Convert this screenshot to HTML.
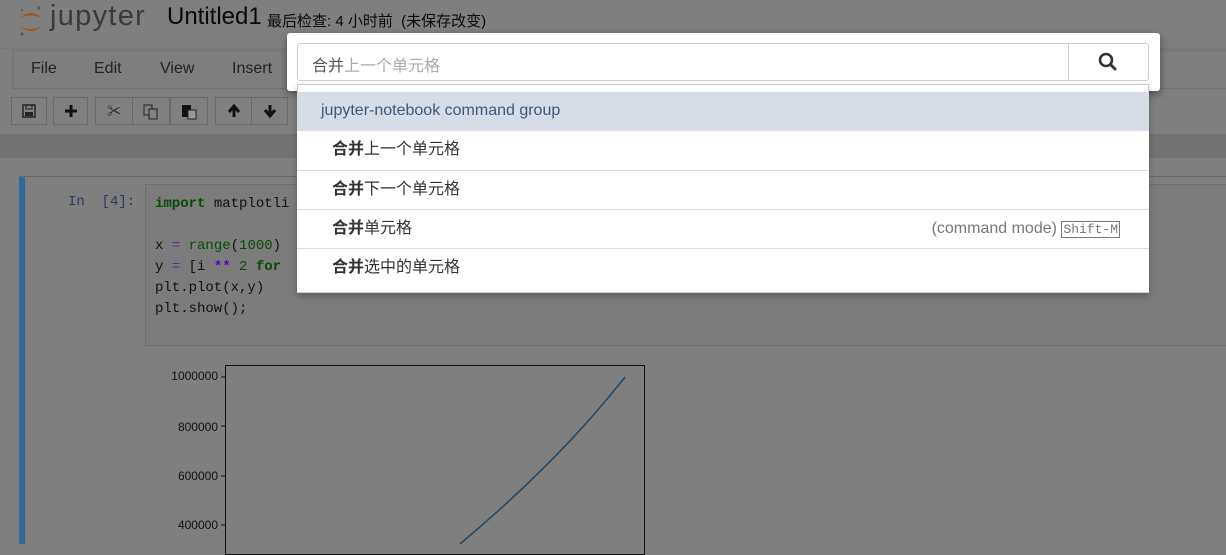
<!DOCTYPE html>
<html><head><meta charset="utf-8"><style>
body{margin:0;width:1226px;height:544px;overflow:hidden;background:#7f7f7f;font-family:"Liberation Sans","Noto Sans CJK SC",sans-serif;position:relative}
.a{position:absolute}
.btn{position:absolute;top:97px;height:28px;border:1px solid #6a6a6a;background:#808080;box-sizing:border-box;color:#1a1a1a;font-size:14px;text-align:center;line-height:26px}
.btn svg{margin-top:6px}
.mono{font-family:"Liberation Mono","Noto Sans CJK SC",monospace;font-size:14px;color:#111}
.row{position:absolute;left:297px;width:852px;height:39px;background:#fff;border-top:1px solid #ddd;box-sizing:border-box;font-size:16px;color:#333;line-height:38px;padding-left:35px;font-family:"Liberation Sans","Noto Sans CJK SC",sans-serif}
</style></head><body>
<div class="a" style="left:18px;top:4px;width:26px;height:32px">
<svg width="26" height="34"><path d="M2 14 Q13 4 24 14 Q13 9 2 14Z" fill="#a35618"/><path d="M2 22 Q13 32 24 22 Q13 28 2 22Z" fill="#a35618"/><circle cx="21" cy="4" r="1.5" fill="#555"/><circle cx="4" cy="30" r="1.5" fill="#555"/><circle cx="4" cy="6" r="1" fill="#555"/></svg></div>
<div class="a" style="left:50px;top:0px;font-size:29px;color:#3a3a3a;letter-spacing:1.3px">jupyter</div>
<div class="a" style="left:167px;top:3px;font-size:24px;color:#0a0a0a">Untitled1</div>
<div class="a" style="left:267px;top:10px;font-size:15px;color:#0a0a0a">最后检查: 4 小时前 &nbsp;(未保存改变)</div>
<div class="a" style="left:0;top:48px;width:1226px;height:1px;background:#777"></div>
<div class="a" style="left:12px;top:50px;width:1214px;height:39px;border:1px solid #737373;border-right:none;box-sizing:border-box;background:#7e7e7e"></div>
<div class="a" style="left:31px;top:60px;font-size:16px;color:#222">File</div>
<div class="a" style="left:94px;top:60px;font-size:16px;color:#222">Edit</div>
<div class="a" style="left:160px;top:60px;font-size:16px;color:#222">View</div>
<div class="a" style="left:232px;top:60px;font-size:16px;color:#222">Insert</div>
<div class="btn" style="left:11px;width:36px"><svg width="14" height="14"><rect x="1" y="1" width="12" height="12" fill="none" stroke="#222" stroke-width="1.5"/><rect x="4" y="1" width="6" height="4" fill="none" stroke="#222"/><rect x="3" y="8" width="8" height="4" fill="#222"/></svg></div>
<div class="btn" style="left:53px;width:35px"><svg width="14" height="14"><path d="M7 1V13M1 7H13" stroke="#111" stroke-width="3"/></svg></div>
<div class="btn" style="left:95px;width:38px">&#9986;</div>
<div class="btn" style="left:132px;width:38px"><svg width="16" height="16"><rect x="1" y="1" width="8" height="10" fill="none" stroke="#222"/><rect x="6" y="5" width="8" height="10" fill="#808080" stroke="#222"/></svg></div>
<div class="btn" style="left:170px;width:38px"><svg width="16" height="16"><rect x="1" y="1" width="9" height="12" fill="#111"/><rect x="7" y="6" width="8" height="9" fill="#999" stroke="#222"/></svg></div>
<div class="btn" style="left:215px;width:37px"><svg width="14" height="14"><path d="M7 13V3M2 8L7 2L12 8" stroke="#111" stroke-width="3" fill="none"/></svg></div>
<div class="btn" style="left:251px;width:37px"><svg width="14" height="14"><path d="M7 1V11M2 6L7 12L12 6" stroke="#111" stroke-width="3" fill="none"/></svg></div>
<div class="a" style="left:0;top:134px;width:1226px;height:24px;background:#737373"></div>
<div class="a" style="left:19px;top:176px;width:1207px;height:368px;border-top:1px solid #6a6a6a"></div>
<div class="a" style="left:19px;top:177px;width:6px;height:367px;background:#2e6a98"></div>
<div class="a mono" style="left:68px;top:194px;color:#2d3a60">In&nbsp;&nbsp;[4]:</div>
<div class="a" style="left:145px;top:184px;width:1081px;height:162px;border:1px solid #6f6f6f;border-right:none;box-sizing:border-box;background:#7c7c7c"></div>
<div class="a mono" style="left:155px;top:194px;line-height:21px"><span style="color:#054d05;font-weight:bold">import</span> matplotli<br><br>x <span style="color:#5a2f99">=</span> <span style="color:#054d05">range</span>(<span style="color:#054d05">1000</span>)<br>y <span style="color:#5a2f99">=</span> [i <span style="color:#5a00b0;font-weight:bold">**</span> <span style="color:#054d05">2</span> <span style="color:#054d05;font-weight:bold">for</span><br>plt.plot(x,y)<br>plt.show();</div>
<div class="a" style="left:225px;top:365px;width:420px;height:190px;border:1px solid #111;box-sizing:border-box"></div>
<div class="a" style="left:158px;top:370px;font-size:12px;color:#111;line-height:12px;text-align:right;width:60px">1000000</div>
<div class="a" style="left:158px;top:420px;font-size:12px;color:#111;text-align:right;width:60px">800000</div>
<div class="a" style="left:158px;top:469px;font-size:12px;color:#111;text-align:right;width:60px">600000</div>
<div class="a" style="left:158px;top:518px;font-size:12px;color:#111;text-align:right;width:60px">400000</div>
<svg class="a" style="left:0;top:0" width="1226" height="544"><g stroke="#111"><line x1="221" y1="377" x2="225" y2="377"/><line x1="221" y1="426" x2="225" y2="426"/><line x1="221" y1="476" x2="225" y2="476"/><line x1="221" y1="525" x2="225" y2="525"/></g><path d="M460 544 Q560 460 625 377" stroke="#1f4a6a" stroke-width="1.5" fill="none"/></svg>
<div class="a" style="left:287px;top:33px;width:873px;height:58px;background:#fff;border-radius:3px;box-shadow:0 3px 8px rgba(0,0,0,.4)"></div>
<div class="a" style="left:297px;top:43px;width:852px;height:38px;border:1px solid #ccc;box-sizing:border-box;border-radius:3px"></div>
<div class="a" style="left:312px;top:52px;font-size:16px;color:#555">合并<span style="color:#aaa">上一个单元格</span></div>
<div class="a" style="left:1068px;top:43px;width:81px;height:38px;border-left:1px solid #ccc;box-sizing:border-box"></div>
<svg class="a" style="left:1097px;top:51px" width="22" height="22"><circle cx="9" cy="9" r="6" stroke="#333" stroke-width="2.6" fill="none"/><line x1="13.5" y1="13.5" x2="18" y2="18" stroke="#333" stroke-width="3" stroke-linecap="round"/></svg>
<div class="a" style="left:297px;top:84px;width:852px;height:209px;background:#fff;border:1px solid #ccc;box-sizing:border-box;box-shadow:0 3px 6px rgba(0,0,0,.25)"></div>
<div class="row" style="top:92px;background:#d6dde6;border:none;color:#3a5a80;padding-left:24px">jupyter-notebook command group</div>
<div class="row" style="top:131px;border-top:none"><b>合并</b>上一个单元格</div>
<div class="row" style="top:170px"><b>合并</b>下一个单元格</div>
<div class="row" style="top:209px"><b>合并</b>单元格<span style="position:absolute;right:29px;color:#777">(command mode) <span style="font-family:'Liberation Mono',monospace;font-size:13px;border:1px solid #777;padding:0 1px">Shift-M</span></span></div>
<div class="row" style="top:248px;height:44px"><b>合并</b>选中的单元格</div>
</body></html>
